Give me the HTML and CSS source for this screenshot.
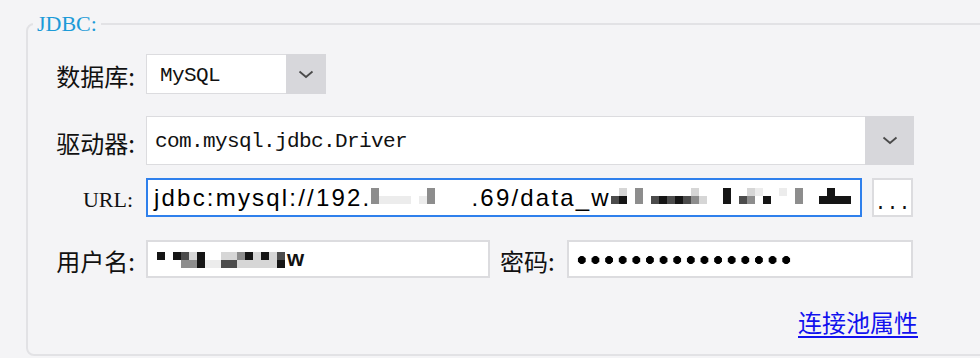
FILE: index.html
```html
<!DOCTYPE html>
<html lang="zh-CN">

<head>
  <meta charset="UTF-8" />
  <meta name="viewport" content="width=device-width, initial-scale=1.0" />
  <title>JDBC 连接</title>
  <link rel="stylesheet" href="styles.css">
</head>

<body>
  <fieldset class="group">
    <legend>JDBC:</legend>

    <div class="row r1">
      <label class="lbl">数据库:</label>
      <div class="select sel-db">
        <span class="value mono">MySQL</span>
        <span class="arrow">
          <svg width="16" height="9" viewBox="0 0 16 9"><path d="M1.5 1.5l6.5 5.5 6.5-5.5" fill="none" stroke="#4a4a4a" stroke-width="1.8"/></svg>
        </span>
      </div>
    </div>

    <div class="row r2">
      <label class="lbl">驱动器:</label>
      <div class="select sel-driver">
        <span class="value mono">com.mysql.jdbc.Driver</span>
        <span class="arrow">
          <svg width="16" height="9" viewBox="0 0 16 9"><path d="M1.5 1.5l6.5 5.5 6.5-5.5" fill="none" stroke="#4a4a4a" stroke-width="1.8"/></svg>
        </span>
      </div>
    </div>

    <div class="row r3">
      <label class="lbl serif">URL:</label>
      <div class="ctl">
        <div class="field url">
          <span class="txt">jdbc:mysql://192.</span>
          <span class="mosaic m-a">
            <i class="g"></i><i class="g"></i>
            <i></i><i class="f"></i>
            <i></i><i class="f"></i>
            <i></i><i class="f"></i>
            <i></i><i class="f"></i>
            <i></i><i></i>
            <i></i><i class="f"></i>
            <i class="g"></i><i class="g"></i>
            <i></i><i></i>
            <i></i><i></i>
            <i></i><i></i>
            <i></i><i></i>
          </span>
          <span class="txt">.69/data_w</span>
          <span class="mosaic">
            <i></i><i class="d"></i>
            <i class="l"></i><i class="k"></i>
            <i></i><i></i>
            <i class="g"></i><i class="g"></i>
            <i></i><i></i>
            <i></i><i class="d"></i>
            <i></i><i class="k"></i>
            <i></i><i class="d"></i>
            <i></i><i class="k"></i>
            <i></i><i class="d"></i>
            <i class="l"></i><i class="g"></i>
            <i></i><i class="l"></i>
            <i></i><i></i>
            <i></i><i></i>
            <i class="k"></i><i class="k"></i>
            <i></i><i></i>
            <i></i><i class="d"></i>
            <i class="l"></i><i class="g"></i>
            <i class="f"></i><i></i>
            <i></i><i class="k"></i>
            <i></i><i></i>
            <i class="f"></i><i></i>
            <i></i><i></i>
            <i class="g"></i><i class="g"></i>
            <i></i><i></i>
            <i></i><i></i>
            <i></i><i class="k"></i>
            <i class="k"></i><i class="k"></i>
            <i></i><i class="k"></i>
            <i></i><i class="k"></i>
          </span>
        </div>
        <button class="more mono">...</button>
      </div>
    </div>

    <div class="row r4">
      <label class="lbl">用户名:</label>
      <div class="ctl">
        <div class="field user">
          <span class="mosaic">
            <i class="k"></i><i></i>
            <i></i><i></i>
            <i class="k"></i><i></i>
            <i class="d"></i><i class="g"></i>
            <i class="l"></i><i class="g"></i>
            <i class="k"></i><i class="k"></i>
            <i></i><i class="f"></i>
            <i></i><i class="f"></i>
            <i class="l"></i><i class="d"></i>
            <i class="l"></i><i class="d"></i>
            <i class="g"></i><i class="l"></i>
            <i class="k"></i><i class="l"></i>
            <i class="l"></i><i class="l"></i>
            <i class="k"></i><i class="l"></i>
            <i class="l"></i><i class="l"></i>
            <i class="d"></i><i class="k"></i>
          </span>
          <span class="tail">w</span>
        </div>
        <label class="lbl-inline">密码:</label>
        <div class="field pass"><span class="dots"></span></div>
      </div>
    </div>

    <div class="links">
      <a href="#" class="pool">连接池属性</a>
    </div>
  </fieldset>
</body>

</html>
```

FILE: styles.css
```css
:root {
  --bg: #f4f4f6;
  --line: #e2e2e5;
  --field-border: #dcdcdf;
  --arrow-bg: #d7d7db;
  --focus: #2f80ec;
  --legend: #1d9bd8;
  --link: #1212ee;
}

body {
  margin: 0;
  background: var(--bg);
  color: #111;
  font-family: "Noto Sans CJK SC", sans-serif;
  overflow: hidden;
}

.mono {
  font-family: "Liberation Mono", "Noto Sans CJK SC", monospace;
}

.serif {
  font-family: "Liberation Serif", "Noto Sans CJK SC", serif;
}

.group {
  margin: 12px -40px 0 26px;
  padding: 18px 0 16px 5px;
  border: 2px solid var(--line);
  border-radius: 8px;
  min-width: 0;
}

.group legend {
  padding: 0 4px;
  font: 22px/24px "Liberation Serif", serif;
  color: var(--legend);
}

.row {
  display: flex;
  align-items: center;
  gap: 11px;
}

.r1 { height: 40px; }
.r2 { height: 49px; margin-top: 22px; }
.r3 { height: 39px; margin-top: 13px; }
.r4 { height: 38px; margin-top: 23px; }

.lbl {
  flex: none;
  width: 102px;
  text-align: right;
  font-size: 24px;
  line-height: 1;
  padding-top: 4px;
}

.lbl.serif {
  font-size: 22px;
  padding-right: 2px;
  box-sizing: border-box;
}

.select {
  display: flex;
  height: 100%;
  box-sizing: border-box;
  border: 1px solid var(--field-border);
  background: #fff;
}

.select .value {
  flex: 1;
  display: flex;
  align-items: center;
  font-size: 21px;
  letter-spacing: -0.6px;
  padding-top: 2px;
}

.select .arrow {
  display: flex;
  align-items: center;
  justify-content: center;
  background: var(--arrow-bg);
  margin: -1px -1px -1px 0;
}

.sel-db { width: 180px; }
.sel-db .value { padding-left: 13px; }
.sel-db .arrow { width: 40px; }

.sel-driver { width: 768px; }
.sel-driver .value { padding-left: 8px; }
.sel-driver .arrow { width: 49px; }

.ctl {
  display: flex;
  align-items: center;
  width: 767px;
  height: 100%;
}

.field {
  display: flex;
  align-items: center;
  height: 100%;
  box-sizing: border-box;
  border: 2px solid var(--field-border);
  background: #fff;
  overflow: hidden;
  white-space: nowrap;
}

.url {
  width: 716px;
  border-color: var(--focus);
  padding-left: 6px;
}

.url .txt {
  font: 24px "Liberation Sans", sans-serif;
  letter-spacing: 2.2px;
  color: #000;
}

.more {
  margin-left: 10px;
  width: 41px;
  height: 39px;
  padding: 12px 0 0;
  border: 2px solid var(--field-border);
  background: #fff;
  font-size: 20px;
  color: #111;
}

.mosaic {
  display: inline-grid;
  grid-template-rows: 8px 8px;
  grid-auto-flow: column;
  grid-auto-columns: 8px;
  margin-top: -4px;
}

.mosaic i.k { background: #151515; }
.mosaic i.d { background: #4c4c4c; }
.mosaic i.g { background: #8d8d8d; }
.mosaic i.l { background: #d6d6d6; }
.mosaic i.f { background: #ececec; }

.m-a {
  width: 100px;
}

.user {
  width: 344px;
  padding-left: 9px;
}

.user .mosaic {
  margin-top: 2px;
}

.user .tail {
  font: bold 22px "Liberation Sans", sans-serif;
  margin-left: 2px;
}

.lbl-inline {
  margin: 0 12px 0 10px;
  font-size: 24px;
  line-height: 1;
  padding-top: 4px;
}

.pass {
  flex: 1;
  padding-left: 6px;
}

.dots {
  width: 218px;
  height: 10px;
  margin-top: 2px;
  background: radial-gradient(circle, #000 3.7px, transparent 4.3px) 0 0 / 13.625px 10px repeat-x;
}

.links {
  width: 885px;
  margin-top: 28px;
  text-align: right;
}

.pool {
  font-size: 24px;
  line-height: 32px;
  color: var(--link);
  text-decoration-thickness: 2px;
  text-underline-offset: 4px;
}
```
